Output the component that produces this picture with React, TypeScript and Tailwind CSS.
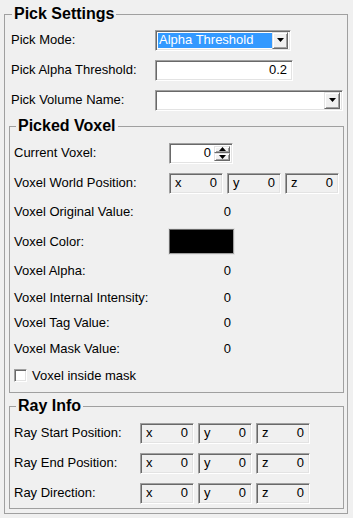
import React from "react";

const sunken =
  "border border-t-[#a0a0a0] border-l-[#a0a0a0] border-b-white border-r-white shadow-[inset_1px_1px_0_#696969,inset_-1px_-1px_0_#e3e3e3]";
const raised =
  "border border-t-[#e3e3e3] border-l-[#e3e3e3] border-b-[#696969] border-r-[#696969] shadow-[inset_1px_1px_0_#ffffff,inset_-1px_-1px_0_#a0a0a0] bg-[#f0f0f0]";

function Arrow({ up = false }: { up?: boolean }) {
  return (
    <svg width="7" height="4" viewBox="0 0 7 4" className={up ? "rotate-180" : ""}>
      <path d="M0 0h7L3.5 4z" fill="#000" />
    </svg>
  );
}

function DropButton() {
  return (
    <div className={`${raised} w-[16px] h-[17px] flex items-center justify-center`}>
      <Arrow />
    </div>
  );
}

function Coord({ axis, w = "w-[54px]" }: { axis: string; w?: string }) {
  return (
    <div className={`${sunken} ${w} h-[21px] flex items-center justify-between pl-[5px] pr-[5px] bg-[#f0f0f0]`}>
      <span>{axis}</span>
      <span>0</span>
    </div>
  );
}

function Group({ title, className, children }: { title: string; className?: string; children: React.ReactNode }) {
  return (
    <fieldset className={`border border-[#a0a0a0] ${className ?? ""}`}>
      <legend className="ml-[2px] text-[16px] leading-[18px] font-bold px-[2px]">{title}</legend>
      {children}
    </fieldset>
  );
}

function ValueRow({ label, h }: { label: string; h: string }) {
  return (
    <div className={`flex items-center ${h}`}>
      <div className="w-[155px]">{label}</div>
      <div className="w-[62px] text-right">0</div>
    </div>
  );
}

export default function App() {
  return (
    <div className="w-[353px] h-[518px] bg-[#f0f0f0] text-black text-[13px] leading-[16px] font-['Liberation_Sans',Arial,sans-serif] pt-[5px] select-none">
      <fieldset className="ml-[4px] w-[344px] border border-[#a0a0a0] pl-[4px] pr-[3px] pb-[4px]">
        <legend className="ml-[3px] px-[2px] text-[16px] leading-[18px] font-bold">Pick Settings</legend>

        <div className="pt-[2px]">
          <div className="flex items-center h-[30px] pl-[2px]">
            <div className="w-[144px]">Pick Mode:</div>
            <div className={`${sunken} w-[136px] h-[21px] bg-white flex items-center p-[2px]`}>
              <div className="flex-1 h-full bg-[#3399ff] text-white pl-[1px] flex items-center">Alpha Threshold</div>
              <DropButton />
            </div>
          </div>
          <div className="flex items-center h-[30px] pl-[2px]">
            <div className="w-[144px]">Pick Alpha Threshold:</div>
            <div className={`${sunken} w-[138px] h-[21px] bg-white flex items-center justify-end pr-[5px]`}>0.2</div>
          </div>
          <div className="flex items-center h-[30px] pl-[2px]">
            <div className="w-[144px]">Pick Volume Name:</div>
            <div className={`${sunken} w-[188px] h-[21px] bg-white flex items-center justify-end p-[2px]`}>
              <DropButton />
            </div>
          </div>
        </div>

        <Group title="Picked Voxel" className="mt-[2px] pl-[4px] pb-[3px]">
          <div className="pt-[3px]">
            <div className="flex items-center h-[30px]">
              <div className="w-[155px]">Current Voxel:</div>
              <div className={`${sunken} w-[64px] h-[21px] bg-white flex items-center p-[2px]`}>
                <div className="flex-1 text-right pr-[3px]">0</div>
                <div className="flex flex-col w-[16px] h-full">
                  <div className={`${raised} flex-1 flex items-center justify-center`}>
                    <Arrow up />
                  </div>
                  <div className={`${raised} flex-1 flex items-center justify-center`}>
                    <Arrow />
                  </div>
                </div>
              </div>
            </div>
            <div className="flex items-center h-[30px]">
              <div className="w-[155px]">Voxel World Position:</div>
              <div className="flex gap-[4px]">
                <Coord axis="x" />
                <Coord axis="y" />
                <Coord axis="z" />
              </div>
            </div>
            <ValueRow label="Voxel Original Value:" h="h-[28px]" />
            <div className="flex items-center h-[31px]">
              <div className="w-[155px]">Voxel Color:</div>
              <div className="w-[65px] h-[25px] bg-black border border-t-[#696969] border-l-[#696969] border-b-[#a0a0a0] border-r-[#a0a0a0] shadow-[0_0_0_1px_#e3e3e3]" />
            </div>
            <ValueRow label="Voxel Alpha:" h="h-[28px]" />
            <ValueRow label="Voxel Internal Intensity:" h="h-[25px]" />
            <ValueRow label="Voxel Tag Value:" h="h-[26px]" />
            <ValueRow label="Voxel Mask Value:" h="h-[26px]" />
            <div className="flex items-center h-[27px] gap-[5px]">
              <div className={`${sunken} w-[13px] h-[13px] bg-white`} />
              <span>Voxel inside mask</span>
            </div>
          </div>
        </Group>

        <Group title="Ray Info" className="mt-[4px] pl-[4px]">
          <div className="pt-[3px]">
            {["Ray Start Position:", "Ray End Position:", "Ray Direction:"].map((l) => (
              <div key={l} className="flex items-center h-[30px]">
                <div className="w-[126px]">{l}</div>
                <div className="flex gap-[4px]">
                  <Coord axis="x" />
                  <Coord axis="y" />
                  <Coord axis="z" />
                </div>
              </div>
            ))}
          </div>
        </Group>
      </fieldset>
    </div>
  );
}
